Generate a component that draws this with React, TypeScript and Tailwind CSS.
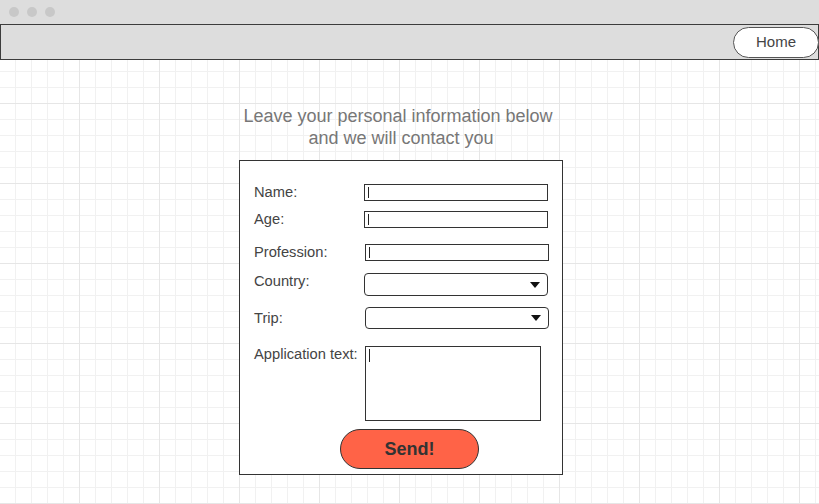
import React from 'react';

const font = "font-['Liberation_Sans',Arial,sans-serif]";

function Caret() {
  return <div className="ml-[3px] w-px self-stretch my-[2px] bg-[#222]" />;
}

function TextInput({ shift = false }: { shift?: boolean }) {
  return (
    <div className={`flex h-[17px] w-[184px] border border-[#333] bg-white ${shift ? 'ml-px' : ''}`}>
      <Caret />
    </div>
  );
}

function SelectBox({ height, shift = false }: { height: string; shift?: boolean }) {
  return (
    <div
      className={`flex ${height} w-[184px] items-center justify-end rounded-[4px] border border-[#333] bg-white pr-[7px] ${shift ? 'ml-px' : ''}`}
    >
      <svg width="10" height="6" viewBox="0 0 10 6">
        <path d="M0 0 L10 0 L5 6 Z" fill="#111" />
      </svg>
    </div>
  );
}

export default function App() {
  const rows = [
    { label: 'Name:', mt: 'mt-[23px]', control: <TextInput /> },
    { label: 'Age:', mt: 'mt-[10px]', control: <TextInput /> },
    { label: 'Profession:', mt: 'mt-[16px]', control: <TextInput shift /> },
  ];

  return (
    <div
      className={`${font} min-h-screen w-full bg-white bg-[linear-gradient(to_right,#e6e6e6_1px,transparent_1px),linear-gradient(to_bottom,#e6e6e6_1px,transparent_1px),linear-gradient(to_right,#f1f1f1_1px,transparent_1px),linear-gradient(to_bottom,#f1f1f1_1px,transparent_1px)] bg-[size:80px_80px,80px_80px,16px_16px,16px_16px] bg-[position:79px_0,0_23px,15px_0,0_7px]`}
    >
      {/* window chrome */}
      <div className="flex h-[24px] items-center gap-[7.5px] bg-[#dddddd] pl-[9px]">
        <span className="h-[10px] w-[10px] rounded-full bg-[#c8c8c8]" />
        <span className="h-[10px] w-[10px] rounded-full bg-[#c8c8c8]" />
        <span className="ml-px h-[10px] w-[10px] rounded-full bg-[#c8c8c8]" />
      </div>

      {/* nav bar */}
      <div className="flex h-[36px] justify-end border border-[#3c3c3c] bg-[#dddddd] pt-[2px]">
        <button className="-mr-px h-[31px] w-[86px] rounded-full border border-[#555] bg-white text-[15px] text-[#444]">
          Home
        </button>
      </div>

      <div className="flex flex-col pl-[239px] pt-[46px]">
        <div className="w-[324px] text-center text-[18px] leading-[21.6px] text-[#777]">
          <p className="pr-[6px]">Leave your personal information below</p>
          <p>and we will contact you</p>
        </div>

        <div className="mt-[11px] flex h-[315px] w-[324px] flex-col border border-[#333] bg-white pl-[14px] text-[14.7px] leading-[17px] text-[#444]">
          {rows.map((r) => (
            <div key={r.label} className={`flex items-center ${r.mt}`}>
              <span className="w-[110px]">{r.label}</span>
              {r.control}
            </div>
          ))}

          <div className="mt-[12px] flex items-start">
            <span className="w-[110px]">Country:</span>
            <SelectBox height="h-[23px]" />
          </div>

          <div className="mt-[11px] flex items-center">
            <span className="w-[110px]">Trip:</span>
            <SelectBox height="h-[22px]" shift />
          </div>

          <div className="mt-[17px] flex items-start">
            <span className="w-[110px]">Application text:</span>
            <div className="ml-px flex h-[75px] w-[176px] items-start border border-[#333] bg-white pt-[2px]">
              <div className="ml-[3px] h-[13px] w-px bg-[#222]" />
            </div>
          </div>

          <button className="ml-[86px] mt-[8px] h-[40px] w-[139px] rounded-full border border-[#333] bg-[#ff6347] text-[18px] font-bold text-[#333]">
            Send!
          </button>
        </div>
      </div>
    </div>
  );
}
